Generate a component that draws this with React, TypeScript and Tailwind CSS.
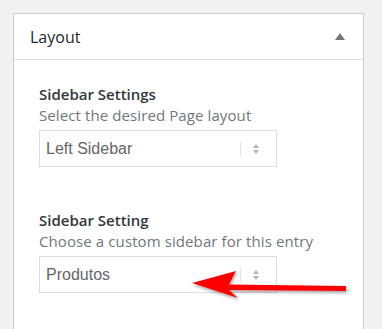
import React from 'react';

function SelectBox({ value }: { value: string }) {
  return (
    <div className="flex h-[37px] w-[238px] items-center border border-[#dddddd] bg-white pl-[6px] pr-[16px]">
      <span className="flex-1 text-[16px] text-[#666666] [font-family:'Liberation_Sans',Arial,sans-serif]">
        {value}
      </span>
      <span className="mr-[11px] h-[14px] w-px bg-[#e5e5e5]" />
      <svg width="8" height="12" viewBox="0 0 8 12" className="text-[#b4b4b4]">
        <path d="M4 1 L7 5 H1 Z" fill="currentColor" />
        <path d="M4 11 L7 7 H1 Z" fill="currentColor" />
      </svg>
    </div>
  );
}

function Field({ title, hint, value }: { title: string; hint: string; value: string }) {
  return (
    <div className="flex flex-col">
      <h4 className="text-[15px] font-semibold leading-[18px] text-[#32373c]">{title}</h4>
      <p className="mt-[1px] text-[15px] leading-[22px] tracking-[0.1px] text-[#72777c]">{hint}</p>
      <div className="mt-[4px]">
        <SelectBox value={value} />
      </div>
    </div>
  );
}

export default function App() {
  return (
    <div className="relative h-[329px] w-[382px] overflow-hidden bg-[#f1f1f1] pl-[13px] pt-[13px] [font-family:'Open_Sans','Noto_Sans',sans-serif]">
      <div className="h-[330px] w-[351px] border border-b-0 border-[#cccccc] bg-white">
        <div className="flex h-[46px] items-center justify-between border-b border-[#dddddd] pl-[16px] pr-[18px]">
          <h2 className="text-[16px] font-normal text-[#23282d]">Layout</h2>
          <svg width="10" height="7" viewBox="0 0 10 7">
            <path d="M5 0 L10 7 H0 Z" fill="#72777c" />
          </svg>
        </div>
        <div className="flex flex-col gap-[44px] pl-[25px] pt-[25px]">
          <Field title="Sidebar Settings" hint="Select the desired Page layout" value="Left Sidebar" />
          <Field title="Sidebar Setting" hint="Choose a custom sidebar for this entry" value="Produtos" />
        </div>
      </div>

      {/* red annotation arrow */}
      <svg
        className="pointer-events-none absolute left-0 top-0"
        width="382"
        height="329"
        viewBox="0 0 382 329"
      >
        <defs>
          <filter id="sh" x="-10%" y="-50%" width="120%" height="200%">
            <feDropShadow dx="1" dy="2" stdDeviation="1.5" floodColor="#000" floodOpacity="0.35" />
          </filter>
        </defs>
        <g filter="url(#sh)" fill="#ff0000">
          <path d="M192 283 L236 271 L229 284.5 L346 286 L346 291 L229 290 L238 298 Z" />
        </g>
      </svg>
    </div>
  );
}
